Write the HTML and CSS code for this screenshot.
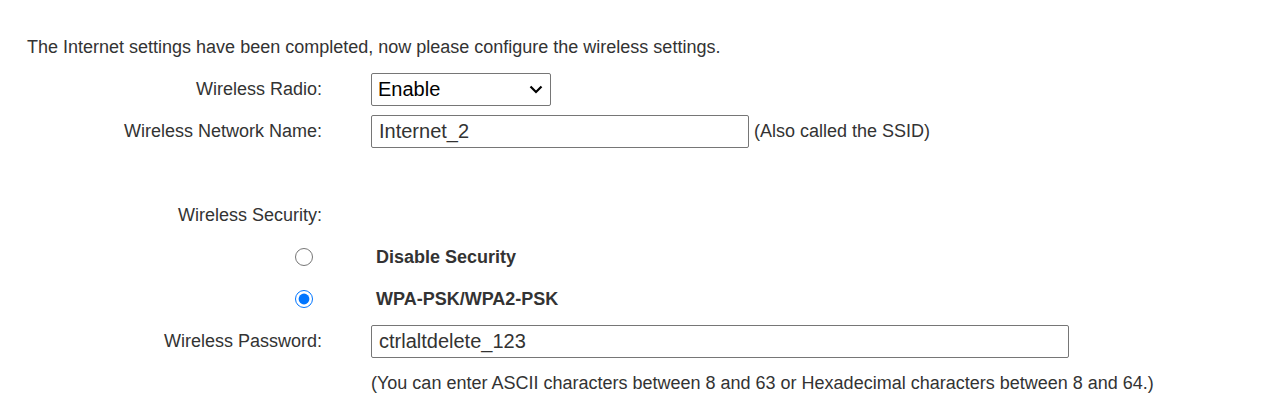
FILE: index.html
```html
<!DOCTYPE html>
<html>
<head>
<meta charset="utf-8">
<link rel="stylesheet" href="styles.css">
</head>
<body>
<div class="page">
  <div class="intro">The Internet settings have been completed, now please configure the wireless settings.</div>
  <div class="form">
    <div class="label">Wireless Radio:</div>
    <div class="field">
      <div class="selwrap">
        <select class="sel"><option>Enable</option><option>Disable</option></select>
        <svg class="chev" width="14" height="9" viewBox="0 0 14 9"><path d="M1.5 1.5 L7 7 L12.5 1.5" fill="none" stroke="#000" stroke-width="2.2"/></svg>
      </div>
    </div>

    <div class="label">Wireless Network Name:</div>
    <div class="field">
      <input class="txt ssid" type="text" value="Internet_2">
      <span class="note">(Also called the SSID)</span>
    </div>

    <div class="label"></div>
    <div class="field"></div>

    <div class="label">Wireless Security:</div>
    <div class="field"></div>

    <div class="label"><input class="radio" type="radio" name="sec"></div>
    <div class="field"><span class="opt">Disable Security</span></div>

    <div class="label"><input class="radio" type="radio" name="sec" checked></div>
    <div class="field"><span class="opt">WPA-PSK/WPA2-PSK</span></div>

    <div class="label">Wireless Password:</div>
    <div class="field">
      <input class="txt pwd" type="text" value="ctrlaltdelete_123">
    </div>

    <div class="label"></div>
    <div class="field"><span class="hint">(You can enter ASCII characters between 8 and 63 or Hexadecimal characters between 8 and 64.)</span></div>
  </div>
</div>
</body>
</html>
```

FILE: styles.css
```css
html, body {
  margin: 0;
  padding: 0;
  background: #ffffff;
}
body {
  font-family: "Liberation Sans", Arial, sans-serif;
  font-size: 18px;
  color: #333333;
}
.page {
  padding-top: 26px;
}
.intro {
  height: 42px;
  line-height: 42px;
  padding-left: 27px;
}
.form {
  display: grid;
  grid-template-columns: 322px 1fr;
  column-gap: 49px;
  grid-auto-rows: 42px;
}
.label {
  display: flex;
  align-items: center;
  justify-content: flex-end;
}
.field {
  display: flex;
  align-items: center;
}
.selwrap {
  position: relative;
  display: flex;
}
.sel {
  -webkit-appearance: none;
  appearance: none;
  box-sizing: border-box;
  width: 180px;
  height: 33px;
  font-family: "Liberation Sans", Arial, sans-serif;
  font-size: 20px;
  color: #000;
  border: 1px solid #767676;
  border-radius: 2px;
  background: #fff;
  padding: 0 6px;
  margin: 0;
}
.chev {
  position: absolute;
  left: 158px;
  top: 12px;
  pointer-events: none;
}
.txt {
  box-sizing: border-box;
  height: 33px;
  border: 1px solid #767676;
  border-radius: 2px;
  padding: 0 7px;
  font-family: "Liberation Sans", Arial, sans-serif;
  font-size: 20px;
  color: #333;
  margin: 0;
  outline: none;
}
.ssid { width: 378px; }
.pwd { width: 698px; }
.note { margin-left: 5px; }
.radio {
  width: 18px;
  height: 18px;
  margin: 0 9px 0 0;
  accent-color: #0075ff;
}
.opt {
  font-weight: bold;
  margin-left: 5px;
}
```
